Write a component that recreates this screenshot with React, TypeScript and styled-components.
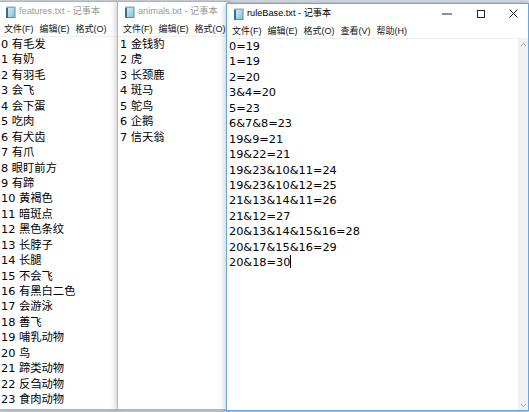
import styled, { createGlobalStyle } from 'styled-components';

const GlobalStyle = createGlobalStyle`
  html, body {
    margin: 0;
    padding: 0;
    background: #c9d6e3;
  }
`;

const Desktop = styled.div`
  position: relative;
  width: 529px;
  height: 412px;
  overflow: hidden;
  background: linear-gradient(#dfe6ee 0px, #d3dde8 3px, #c9d6e3 100%);
`;

const Win = styled.div<{ $left: number; $top: number; $width: number; $height: number; $active?: boolean }>`
  position: absolute;
  left: ${p => p.$left}px;
  top: ${p => p.$top}px;
  width: ${p => p.$width}px;
  height: ${p => p.$height}px;
  box-sizing: border-box;
  display: flex;
  flex-direction: column;
  overflow: hidden;
  background: #ffffff;
  border: 1px solid ${p => (p.$active ? '#6aa6de' : '#b4b4b4')};
  box-shadow: 0 0 7px rgba(0, 0, 0, 0.28);
`;

const TitleBar = styled.div<{ $active?: boolean }>`
  display: flex;
  align-items: center;
  height: 19px;
  flex-shrink: 0;
  padding-left: 6px;
  gap: 3px;
  font-family: 'Liberation Sans', 'Noto Sans CJK SC', sans-serif;
  font-size: 9.2px;
  color: ${p => (p.$active ? '#000000' : '#999999')};
`;

const Title = styled.span`
  white-space: nowrap;
  line-height: 19px;
`;

const Controls = styled.div`
  margin-left: auto;
  display: flex;
  height: 100%;
`;

const CtrlButton = styled.div<{ $w: number }>`
  width: ${p => p.$w}px;
  display: flex;
  align-items: center;
  justify-content: center;
`;

const MenuBar = styled.div`
  display: flex;
  gap: 6px;
  height: 15px;
  flex-shrink: 0;
  padding: 2px 5px 0;
  box-sizing: border-box;
  font-family: 'Liberation Sans', 'Noto Sans CJK SC', sans-serif;
  font-size: 9px;
  line-height: 13px;
  color: #111111;
  white-space: nowrap;
`;

const Body = styled.div`
  flex: 1;
  display: flex;
  min-height: 0;
  border-top: 1px solid #f0f0f0;
`;

const TextArea = styled.div`
  flex: 1;
  padding-left: 2px;
  font-family: 'DejaVu Sans', 'Noto Sans CJK SC', sans-serif;
  font-size: 11.3px;
  line-height: 15.44px;
  color: #000000;
  white-space: pre;
  overflow: hidden;
`;

const Line = styled.div`
  height: 15.44px;
`;

const Caret = styled.span`
  display: inline-block;
  width: 1px;
  height: 13px;
  background: #000000;
  vertical-align: -2px;
`;

const Scrollbar = styled.div`
  width: 10px;
  background: #f0f0f0;
  display: flex;
  flex-direction: column;
  justify-content: space-between;
  align-items: center;
  padding: 3px 0 2px;
`;

const NotepadIcon = () => (
  <svg width="11" height="12" viewBox="0 0 11 12">
    <defs>
      <linearGradient id="np" x1="0" y1="0" x2="1" y2="1">
        <stop offset="0" stopColor="#d6eef6" />
        <stop offset="1" stopColor="#7ec2d9" />
      </linearGradient>
    </defs>
    <rect x="1.5" y="1.5" width="8.5" height="10" fill="url(#np)" stroke="#5b8ea6" strokeWidth="1" />
    <rect x="1" y="1" width="2" height="11" fill="#3d6f88" />
    <rect x="1" y="0.5" width="9.5" height="1.5" fill="#9aa9b3" />
  </svg>
);

const Chevron = ({ up }: { up?: boolean }) => (
  <svg width="7" height="5" viewBox="0 0 7 5">
    <path d={up ? 'M1 4 L3.5 1.5 L6 4' : 'M1 1 L3.5 3.5 L6 1'} fill="none" stroke="#a6a6a6" strokeWidth="1" />
  </svg>
);

const menus = ['文件(F)', '编辑(E)', '格式(O)', '查看(V)', '帮助(H)'];

const features = [
  '0 有毛发', '1 有奶', '2 有羽毛', '3 会飞', '4 会下蛋', '5 吃肉', '6 有犬齿', '7 有爪',
  '8 眼盯前方', '9 有蹄', '10 黄褐色', '11 暗斑点', '12 黑色条纹', '13 长脖子', '14 长腿',
  '15 不会飞', '16 有黑白二色', '17 会游泳', '18 善飞', '19 哺乳动物', '20 鸟', '21 蹄类动物',
  '22 反刍动物', '23 食肉动物',
];

const animals = ['1 金钱豹', '2 虎', '3 长颈鹿', '4 斑马', '5 鸵鸟', '6 企鹅', '7 信天翁'];

const rules = [
  '0=19', '1=19', '2=20', '3&4=20', '5=23', '6&7&8=23', '19&9=21', '19&22=21',
  '19&23&10&11=24', '19&23&10&12=25', '21&13&14&11=26', '21&12=27',
  '20&13&14&15&16=28', '20&17&15&16=29', '20&18=30',
];

type NotepadProps = {
  file: string;
  left: number;
  top: number;
  width: number;
  height: number;
  lines: string[];
  menuCount: number;
  active?: boolean;
};

// windows further back are clipped where the next one covers them
const Notepad = ({ file, left, top, width, height, lines, menuCount, active }: NotepadProps) => (
  <Win $left={left} $top={top} $width={width} $height={height} $active={active}>
    <TitleBar $active={active}>
      <NotepadIcon />
      <Title>{file} - 记事本</Title>
      {active && (
        <Controls>
          <CtrlButton $w={34}>
            <svg width="10" height="2" viewBox="0 0 10 2">
              <path d="M0 1 H10" stroke="#222" strokeWidth="1" />
            </svg>
          </CtrlButton>
          <CtrlButton $w={34}>
            <svg width="8" height="8" viewBox="0 0 8 8">
              <rect x="0.5" y="0.5" width="7" height="7" fill="none" stroke="#222" strokeWidth="1" />
            </svg>
          </CtrlButton>
          <CtrlButton $w={30}>
            <svg width="9" height="9" viewBox="0 0 9 9">
              <path d="M0.5 0.5 L8.5 8.5 M8.5 0.5 L0.5 8.5" stroke="#222" strokeWidth="1" />
            </svg>
          </CtrlButton>
        </Controls>
      )}
    </TitleBar>
    <MenuBar>
      {menus.slice(0, menuCount).map(m => (
        <span key={m}>{m}</span>
      ))}
    </MenuBar>
    <Body>
      <TextArea>
        {lines.map((l, i) => (
          <Line key={i}>
            {l}
            {active && i === lines.length - 1 && <Caret />}
          </Line>
        ))}
      </TextArea>
      {active && (
        <Scrollbar>
          <Chevron up />
          <Chevron />
        </Scrollbar>
      )}
    </Body>
  </Win>
);

const App = () => (
  <>
    <GlobalStyle />
    <Desktop>
      <Notepad file="features.txt" left={-2} top={1} width={121} height={409} lines={features} menuCount={3} />
      <Notepad file="animals.txt" left={117} top={1} width={112} height={409} lines={animals} menuCount={3} />
      <Notepad file="ruleBase.txt" left={226} top={3} width={303} height={408} lines={rules} menuCount={5} active />
    </Desktop>
  </>
);

export default App;
